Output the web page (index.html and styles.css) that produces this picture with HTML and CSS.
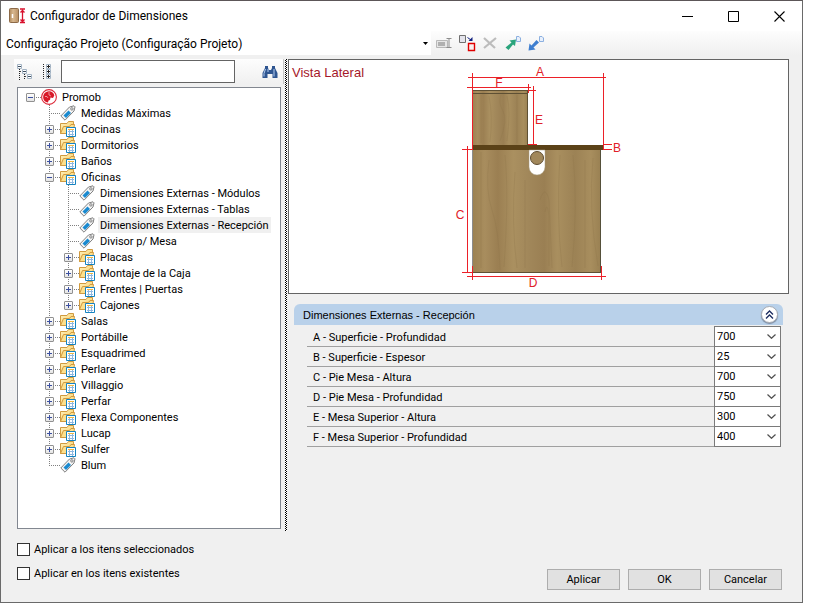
FILE: index.html
```html
<!DOCTYPE html>
<html lang="es">
<head>
    <meta charset="UTF-8">
    <meta name="viewport" content="width=device-width, initial-scale=1.0">
    <title>Configurador de Dimensiones</title>
    <link rel="stylesheet" href="styles.css">
</head>
<body>
    <!-- shared icons -->
    <svg class="sprite" width="0" height="0" aria-hidden="true">
        <linearGradient id="gold" x1="0" y1="0" x2="1" y2="1">
            <stop offset="0" stop-color="#fff3c0"/>
            <stop offset="1" stop-color="#f8ca5c"/>
        </linearGradient>
        <symbol id="folder" viewBox="0 0 16 16">
            <path d="M.5 12.500v-10h6.500l1.500-2h5v12z" fill="url(#gold)" stroke="#d09a40"/>
            <path d="M.5 12.500 3.500 5.500h6l1.500-2h3.500l-1.500 9z" fill="#fde08c" stroke="#d09a40"/>
            <path d="M6.500 6.500h9v9h-9z" fill="#fff" stroke="#1583c0"/>
            <path d="M8 8.500h6" stroke="#f0b840"/>
            <path d="M8 10.500h6M8 13.500h6M9.500 9v6M12.500 9v6" stroke="#8fb8e0" fill="none"/>
        </symbol>
        <symbol id="tag" viewBox="0 0 16 16">
            <path d="M.8 11 9.500 2 14 .8l1 1L14 6 5 15.200z" fill="#f4f4f4" stroke="#808080"/>
            <path d="M3.500 10.500 8.500 5.500 11 8 6 13z" fill="#1a8ad0"/>
            <circle cx="11.900" cy="3.900" r="1.200" fill="#fff" stroke="#808080"/>
        </symbol>
        <symbol id="chevron" viewBox="0 0 9 5">
            <path d="M.5.500 4.500 4.300 8.500.500" fill="none" stroke="#505050" stroke-width="1.200"/>
        </symbol>
    </svg>

    <div class="window">
        <header class="titlebar">
            <svg class="app-icon" width="17" height="16" viewBox="0 0 17 16">
                <linearGradient id="door">
                    <stop offset="0" stop-color="#b08a5c"/>
                    <stop offset=".4" stop-color="#d8b890"/>
                    <stop offset="1" stop-color="#b89064"/>
                </linearGradient>
                <rect x=".5" y=".5" width="9" height="14" rx="1" fill="url(#door)" stroke="#8c6a48"/>
                <path d="M3.500 6v4" stroke="#fff" stroke-width="1.500"/>
                <path d="M11 1h5M11 14.500h5M13.500 2v12M11.500 4.500l2-2 2 2M11.500 11.500l2 2 2-2" fill="none" stroke="#d8102c" stroke-width="1.300"/>
            </svg>
            <h1>Configurador de Dimensiones</h1>
            <div class="window-buttons">
                <button type="button" aria-label="Minimizar"><svg width="11" height="11"><path d="M0 5.500h11" stroke="#000"/></svg></button>
                <button type="button" aria-label="Maximizar"><svg width="11" height="11"><path d="M.5.500h10v10h-10z" fill="none" stroke="#000"/></svg></button>
                <button type="button" aria-label="Cerrar"><svg width="11" height="11"><path d="M.5.500l10 10M10.500.500l-10 10" stroke="#000" stroke-width="1.100"/></svg></button>
            </div>
        </header>

        <div class="toolbar">
            <div class="project">
                <select aria-label="Proyecto">
                    <option>Configuração Projeto (Configuração Projeto)</option>
                </select>
                <svg class="project-arrow" width="5" height="3"><path d="M0 0h5L2.500 3z"/></svg>
            </div>
            <div class="tools">
                <button type="button" aria-label="Renombrar">
                    <svg width="17" height="18" viewBox="0 0 17 18">
                        <path d="M.5 6.500h11v7H.5z" fill="#e6e6e6" stroke="#b8b8b8"/>
                        <path d="M2 8h7v4H2z" fill="#b0b0b0"/>
                        <path d="M10.500 4.500h5M13 5v8M10.500 13.500h5" stroke="#8c8c8c" fill="none"/>
                    </svg>
                </button>
                <button type="button" aria-label="Duplicar">
                    <svg width="17" height="18" viewBox="0 0 17 18">
                        <path d="M.5 1.500h6v7h-6z" fill="#e4e4ec" stroke="#707070"/>
                        <path d="M9.500 9.500h6v7h-6z" fill="#f8f0f0" stroke="#e00000" stroke-width="1.400"/>
                        <path d="M8.500 3.500 12 6" stroke="#102080"/>
                        <path d="M13.500 3v4h-4z" fill="#102080"/>
                    </svg>
                </button>
                <button type="button" aria-label="Eliminar">
                    <svg width="17" height="18" viewBox="0 0 17 18"><path d="M2 4 13 14M14 4 2 14" stroke="#bcbcbc" stroke-width="2.200" fill="none"/></svg>
                </button>
                <button type="button" aria-label="Exportar">
                    <svg width="17" height="18" viewBox="0 0 17 18">
                        <path d="M.5 13.500 6.500 8.500 4.500 6.500 11 5.500 10 12 8 10.500 3.500 16z" fill="#2aa47c"/>
                        <path d="M11.500 2.500h2.500l1.500 1.500v3.500h-4z" fill="#e8f0fc" stroke="#8cb0e0"/>
                    </svg>
                </button>
                <button type="button" aria-label="Importar">
                    <svg width="17" height="18" viewBox="0 0 17 18">
                        <path d="M.5 16.500 1.500 9.500 3.500 11.500 8.500 6 11 8.500 5.500 13.500 7.500 15.500z" fill="#3f7fd0"/>
                        <path d="M11.500 2.500h2.500l1.500 1.500v3.500h-4z" fill="#e8f0fc" stroke="#8cb0e0"/>
                    </svg>
                </button>
            </div>
        </div>

        <main class="content">
            <section class="sidebar">
                <div class="searchbar">
                    <button type="button" aria-label="Contraer">
                        <svg width="16" height="16" viewBox="0 0 16 16">
                            <path d="M2.500 5v11M7.500 10v6" stroke="#222" stroke-dasharray="1 1"/>
                            <path d="M3 7.500h2M8 12.500h2" stroke="#444" stroke-dasharray="1 1"/>
                            <path d="M.5.500h4v4h-4zM5.500 5.500h4v4h-4zM10.500 10.500h4v4h-4z" fill="#fff" stroke="#a4b4c4"/>
                            <path d="M1 2.500h3M6 7.500h3M11 12.500h3" stroke="#405060"/>
                        </svg>
                    </button>
                    <button type="button" aria-label="Expandir">
                        <svg width="16" height="16" viewBox="0 0 16 16">
                            <path d="M4.500 0v16" stroke="#222" stroke-dasharray="1 1"/>
                            <path d="M7.500.500h4v4h-4zM7.500 5.500h4v4h-4zM7.500 10.500h4v4h-4z" fill="#fff" stroke="#a4b4c4"/>
                            <path d="M8 2.500h3M8 7.500h3M8 12.500h3M9.500 1v3M9.500 6v3M9.500 11v3" stroke="#222"/>
                        </svg>
                    </button>
                    <input type="text" aria-label="Buscar">
                    <button class="find" type="button" aria-label="Buscar elemento">
                        <svg width="16" height="14" viewBox="0 0 16 14">
                            <path d="M3 1h3v2l1 2h2l1-2V1h3v2l2.500 5v5h-5V9h-5v4h-5V8L3 3z" fill="#2e5590"/>
                            <path d="M3.500 4 2 8.500v3M12 4v7.500M6 4v3" stroke="#b4cdf0" fill="none"/>
                        </svg>
                    </button>
                </div>

                <div class="tree">
                    <ul>
                        <li>
                            <div class="node"><button class="toggle" aria-label="Contraer"></button>
                                <svg class="logo" viewBox="0 0 16 16">
                                    <circle cx="8" cy="8" r="7.400" fill="#fff" stroke="#dc2838" stroke-width="1.100"/>
                                    <path d="M7 13.500C3.500 13 2 10.500 2.200 7.500 2.500 4.500 5 2.500 8 2.300c3 0 4.800 1.700 5.300 4.200L12 9l-2.500-.5L9 11l-1.500.5z" fill="#d81828"/>
                                    <path d="M8 3v3l2 1M4 7.500h2l1 1.500" stroke="#f4b0b4" stroke-width=".8" fill="none"/>
                                </svg><span>Promob</span></div>
                            <ul>
                                <li><div class="node leaf"><svg><use href="#tag"/></svg><span>Medidas Máximas</span></div></li>
                                <li><div class="node"><button class="toggle plus" aria-label="Expandir"></button><svg><use href="#folder"/></svg><span>Cocinas</span></div></li>
                                <li><div class="node"><button class="toggle plus" aria-label="Expandir"></button><svg><use href="#folder"/></svg><span>Dormitorios</span></div></li>
                                <li><div class="node"><button class="toggle plus" aria-label="Expandir"></button><svg><use href="#folder"/></svg><span>Baños</span></div></li>
                                <li>
                                    <div class="node"><button class="toggle" aria-label="Contraer"></button><svg><use href="#folder"/></svg><span>Oficinas</span></div>
                                    <ul>
                                        <li><div class="node leaf"><svg><use href="#tag"/></svg><span>Dimensiones Externas - Módulos</span></div></li>
                                        <li><div class="node leaf"><svg><use href="#tag"/></svg><span>Dimensiones Externas - Tablas</span></div></li>
                                        <li><div class="node leaf"><svg><use href="#tag"/></svg><span class="selected">Dimensiones Externas - Recepción</span></div></li>
                                        <li><div class="node leaf"><svg><use href="#tag"/></svg><span>Divisor p/ Mesa</span></div></li>
                                        <li><div class="node"><button class="toggle plus" aria-label="Expandir"></button><svg><use href="#folder"/></svg><span>Placas</span></div></li>
                                        <li><div class="node"><button class="toggle plus" aria-label="Expandir"></button><svg><use href="#folder"/></svg><span>Montaje de la Caja</span></div></li>
                                        <li><div class="node"><button class="toggle plus" aria-label="Expandir"></button><svg><use href="#folder"/></svg><span>Frentes | Puertas</span></div></li>
                                        <li><div class="node"><button class="toggle plus" aria-label="Expandir"></button><svg><use href="#folder"/></svg><span>Cajones</span></div></li>
                                    </ul>
                                </li>
                                <li><div class="node"><button class="toggle plus" aria-label="Expandir"></button><svg><use href="#folder"/></svg><span>Salas</span></div></li>
                                <li><div class="node"><button class="toggle plus" aria-label="Expandir"></button><svg><use href="#folder"/></svg><span>Portábille</span></div></li>
                                <li><div class="node"><button class="toggle plus" aria-label="Expandir"></button><svg><use href="#folder"/></svg><span>Esquadrimed</span></div></li>
                                <li><div class="node"><button class="toggle plus" aria-label="Expandir"></button><svg><use href="#folder"/></svg><span>Perlare</span></div></li>
                                <li><div class="node"><button class="toggle plus" aria-label="Expandir"></button><svg><use href="#folder"/></svg><span>Villaggio</span></div></li>
                                <li><div class="node"><button class="toggle plus" aria-label="Expandir"></button><svg><use href="#folder"/></svg><span>Perfar</span></div></li>
                                <li><div class="node"><button class="toggle plus" aria-label="Expandir"></button><svg><use href="#folder"/></svg><span>Flexa Componentes</span></div></li>
                                <li><div class="node"><button class="toggle plus" aria-label="Expandir"></button><svg><use href="#folder"/></svg><span>Lucap</span></div></li>
                                <li><div class="node"><button class="toggle plus" aria-label="Expandir"></button><svg><use href="#folder"/></svg><span>Sulfer</span></div></li>
                                <li><div class="node leaf"><svg><use href="#tag"/></svg><span>Blum</span></div></li>
                            </ul>
                        </li>
                    </ul>
                </div>
            </section>

            <div class="splitter"></div>

            <section class="details">
                <div class="preview">
                    <h2>Vista Lateral</h2>
                    <svg width="180" height="230" viewBox="449 62 180 230">
                        <defs>
                            <linearGradient id="wood">
                                <stop offset="0" stop-color="#9c8150"/>
                                <stop offset=".1" stop-color="#a88d5e"/>
                                <stop offset=".2" stop-color="#9b7f52"/>
                                <stop offset=".32" stop-color="#aa9060"/>
                                <stop offset=".44" stop-color="#a1875a"/>
                                <stop offset=".56" stop-color="#9a7f53"/>
                                <stop offset=".66" stop-color="#a98f5f"/>
                                <stop offset=".8" stop-color="#9c8255"/>
                                <stop offset=".92" stop-color="#a88e5e"/>
                                <stop offset="1" stop-color="#998052"/>
                            </linearGradient>
                        </defs>
                        <rect x="472" y="90" width="56" height="55" fill="url(#wood)"/>
                        <rect x="472" y="149" width="129" height="124" fill="url(#wood)"/>
                        <!-- grain -->
                        <g fill="none" stroke="#8c7248" stroke-width=".8" opacity=".3">
                            <path d="M481 95v48M489 96q4 20 1 46M501 95q-3 8 2 16t-3 30M507 96q4 14 0 45M517 95v48"/>
                            <path d="M481 152v116M489 160q-4 30 3 50t8 60M505 155q4 40-1 112M515 172q-4 50 2 96M525 180v88M540 200q5-16 9 0l3 68M545 212q2-12 4 4v50M560 155q-4 60 2 112M573 155q5 50-1 112M585 160v108M593 158q-5 50 5 108"/>
                        </g>
                        <path d="M472 90.500h56M472 93.500h56M527.500 90v55M472 272.500h129" stroke="#5e5034"/>
                        <path d="M600.500 150v123" stroke="#55503a"/>
                        <path d="M472.500 150v122" stroke="#8c8c8c"/>
                        <path d="M472 145h132v5H472z" fill="#5b4218"/>
                        <path d="M529 150h16v17a8 8 0 0 1-16 0z" fill="#fff" stroke="#a59a80" stroke-width=".5"/>
                        <circle cx="537" cy="158" r="6.500" fill="#a1875a" stroke="#5e4c30"/>
                        <g stroke="#ec2028" fill="none">
                            <path d="M468 77.500h138M472.500 73v77M603.500 73v77" />
                            <path d="M467 87.500h64M528.500 84v9"/>
                            <path d="M533.500 86v58M528 90.500h8M528 144.500h9"/>
                            <path d="M603 144.500h9M603 149.500h9"/>
                            <path d="M467.500 146v127M462 149.500h11M462 272.500h11"/>
                            <path d="M467 276.500h139M472.500 266v14M601.500 266v14"/>
                        </g>
                        <g class="dims">
                            <text x="540" y="76">A</text>
                            <text x="499" y="87">F</text>
                            <text x="539" y="124">E</text>
                            <text x="617" y="152">B</text>
                            <text x="460" y="219">C</text>
                            <text x="533" y="287">D</text>
                        </g>
                    </svg>
                </div>

                <div class="group">
                    <div class="group-header">
                        <h3>Dimensiones Externas - Recepción</h3>
                        <button type="button" aria-label="Contraer grupo">
                            <svg width="9" height="9"><path d="M1 4.500 4.500 1 8 4.500M1 8.500 4.500 5 8 8.500" fill="none" stroke="#1c2c60" stroke-width="1.300"/></svg>
                        </button>
                    </div>
                    <div class="fields">
                        <div class="field">
                            <label for="dim-a">A - Superficie - Profundidad</label>
                            <div class="combo"><select id="dim-a"><option>700</option></select><svg><use href="#chevron"/></svg></div>
                        </div>
                        <div class="field">
                            <label for="dim-b">B - Superficie - Espesor</label>
                            <div class="combo"><select id="dim-b"><option>25</option></select><svg><use href="#chevron"/></svg></div>
                        </div>
                        <div class="field">
                            <label for="dim-c">C - Pie Mesa - Altura</label>
                            <div class="combo"><select id="dim-c"><option>700</option></select><svg><use href="#chevron"/></svg></div>
                        </div>
                        <div class="field">
                            <label for="dim-d">D - Pie Mesa - Profundidad</label>
                            <div class="combo"><select id="dim-d"><option>750</option></select><svg><use href="#chevron"/></svg></div>
                        </div>
                        <div class="field">
                            <label for="dim-e">E - Mesa Superior - Altura</label>
                            <div class="combo"><select id="dim-e"><option>300</option></select><svg><use href="#chevron"/></svg></div>
                        </div>
                        <div class="field">
                            <label for="dim-f">F - Mesa Superior - Profundidad</label>
                            <div class="combo"><select id="dim-f"><option>400</option></select><svg><use href="#chevron"/></svg></div>
                        </div>
                    </div>
                </div>
            </section>
        </main>

        <footer class="footer">
            <div class="checks">
                <label><input type="checkbox">Aplicar a los itens seleccionados</label>
                <label><input type="checkbox">Aplicar en los itens existentes</label>
            </div>
            <div class="actions">
                <button type="button">Aplicar</button>
                <button type="button">OK</button>
                <button type="button">Cancelar</button>
            </div>
        </footer>
    </div>
</body>
</html>
```
FILE: styles.css
```css
* {
  box-sizing: border-box;
}

body {
  margin: 0;
  background: #fff;
  color: #000;
  font-family: Roboto, "Liberation Sans", sans-serif;
  font-size: 11px;
}

button,
input,
select {
  font: inherit;
  color: inherit;
}

button {
  padding: 0;
  border: none;
  background: none;
}

h1,
h2,
h3 {
  margin: 0;
  font-weight: normal;
}

svg {
  display: block;
  flex: none;
}

.sprite {
  position: absolute;
}

.window {
  display: flex;
  flex-direction: column;
  min-height: calc(100vh - 10px);
  margin-right: 15px;
  background: #f0f0f0;
  border: 1px solid #6a6a6a;
  border-top-color: #5c5658;
}

/* title bar */
.titlebar {
  display: flex;
  align-items: center;
  height: 30px;
  padding-left: 8px;
  background: #fff;
}

.titlebar h1 {
  flex: 1;
  margin-left: 4px;
  font-size: 12px;
}

.window-buttons {
  display: flex;
}

.window-buttons button {
  display: flex;
  align-items: center;
  justify-content: center;
  width: 46px;
  height: 30px;
}

/* toolbar */
.toolbar {
  display: flex;
  height: 24px;
  background: linear-gradient(#fdfdfd, #f0f0f0);
}

.project {
  position: relative;
  width: 430px;
  background: #fff;
}

.project select {
  width: 100%;
  height: 24px;
  padding: 1px 16px 0 5px;
  border: none;
  background: #fff;
  appearance: none;
  font-size: 12px;
}

.project-arrow {
  position: absolute;
  right: 3px;
  top: 11px;
  pointer-events: none;
}

.tools {
  display: flex;
  align-items: center;
  gap: 6px;
  padding-left: 5px;
}

/* main area */
.content {
  display: flex;
  flex: 1;
  padding: 4px 13px 0;
}

.sidebar {
  display: flex;
  flex-direction: column;
  width: 270px;
}

.searchbar {
  display: flex;
  align-items: center;
  height: 25px;
  padding: 0 5px 0 3px;
  gap: 6px;
  background: linear-gradient(#fdfdfd, #f0f0f0);
  border-right: 1px solid #c8c8c8;
}

.searchbar input {
  width: 174px;
  height: 23px;
  padding: 0 3px;
  border: 1px solid #646464;
  background: #fff;
}

.find {
  margin-left: auto;
}

.tree {
  flex: 1;
  margin: 3px 3px 2px;
  padding: 1px 3px;
  border: 1px solid #828790;
  background: #fff;
}

.tree ul {
  margin: 0;
  padding: 0;
  list-style: none;
}

.tree ul ul {
  padding-left: 19px;
}

/* dotted guide lines of the tree */
.tree ul ul > li {
  background: repeating-linear-gradient(#808080 0 1px, transparent 1px 2px) 9px 0 / 1px 100% no-repeat;
}

.tree ul ul > li:last-child {
  background-size: 1px 8px;
}

.node {
  display: flex;
  align-items: center;
  height: 16px;
  padding-left: 5px;
  background: repeating-linear-gradient(to right, #808080 0 1px, transparent 1px 2px) 9px 8px / 12px 1px no-repeat;
}

.node.leaf {
  padding-left: 20px;
}

.node svg {
  width: 16px;
  height: 16px;
}

.node span {
  height: 16px;
  margin-left: 3px;
  padding: 0 2px;
  line-height: 18px;
  white-space: nowrap;
}

.node .selected {
  background: #f0f0f0;
}

.toggle {
  width: 9px;
  height: 9px;
  margin-right: 6px;
  border: 1px solid #919191;
  border-radius: 1px;
  background: linear-gradient(#3c50a0, #3c50a0) center / 5px 1px no-repeat, linear-gradient(#fff, #e4e4e4);
}

.toggle.plus {
  background: linear-gradient(#3c50a0, #3c50a0) center / 5px 1px no-repeat, linear-gradient(#3c50a0, #3c50a0) center / 1px 5px no-repeat, linear-gradient(#fff, #e4e4e4);
}

.splitter {
  width: 2px;
  margin: 0 1px;
  background: repeating-conic-gradient(#000 0 25%, #fff 0 50%) 0 0 / 2px 2px;
}

.details {
  flex: 1;
}

/* side view drawing */
.preview {
  display: grid;
  height: 235px;
  border: 1px solid #646464;
  background: #fff;
}

.preview h2,
.preview svg {
  grid-area: 1 / 1;
}

.preview h2 {
  padding: 5px 3px;
  color: #a5182a;
  font-family: "Liberation Sans", sans-serif;
  font-size: 13px;
}

.preview svg {
  justify-self: center;
  margin-top: 2px;
}

.dims {
  fill: #e02028;
  font-family: "Liberation Sans", sans-serif;
  font-size: 12px;
  text-anchor: middle;
}

/* dimension fields */
.group {
  margin: 10px 6px 0;
}

.group-header {
  display: flex;
  align-items: center;
  justify-content: space-between;
  height: 21px;
  padding: 0 5px 0 9px;
  border-radius: 6px 6px 0 0;
  background: #b9d1ea;
}

.group-header h3 {
  font-family: "Liberation Sans", sans-serif;
  font-size: 11px;
}

.group-header button {
  display: flex;
  align-items: center;
  justify-content: center;
  width: 17px;
  height: 17px;
  border: 1px solid #a8acb4;
  border-radius: 50%;
  background: #fff;
  box-shadow: 0 1px 1px #7888a0;
}

.fields {
  margin: 2px 2px 0 13px;
}

.field {
  display: flex;
  height: 20px;
  border-bottom: 1px solid #a0a0a0;
}

.field label {
  flex: 1;
  padding-left: 6px;
  line-height: 22px;
}

.combo {
  position: relative;
  width: 67px;
  height: 21px;
  margin-top: -1px;
}

.combo select {
  display: block;
  width: 100%;
  height: 21px;
  padding: 0 0 1px 2px;
  border: 1px solid #7a7a7a;
  border-radius: 0;
  background: #fff;
  appearance: none;
}

.combo svg {
  position: absolute;
  right: 5px;
  top: 8px;
  width: 9px;
  height: 5px;
  pointer-events: none;
}

/* footer */
.footer {
  display: flex;
  justify-content: space-between;
  align-items: flex-end;
  padding: 12px 20px 12px 16px;
}

.checks {
  display: flex;
  flex-direction: column;
  gap: 11px;
  padding-bottom: 10px;
}

.checks label {
  display: flex;
  align-items: center;
  gap: 4px;
}

.checks input {
  width: 13px;
  height: 13px;
  margin: 0;
  border: 1px solid #333;
  background: #fff;
  appearance: none;
}

.actions {
  display: flex;
  gap: 8px;
}

.actions button {
  width: 73px;
  height: 21px;
  border: 1px solid #adadad;
  background: #e1e1e1;
}
```
